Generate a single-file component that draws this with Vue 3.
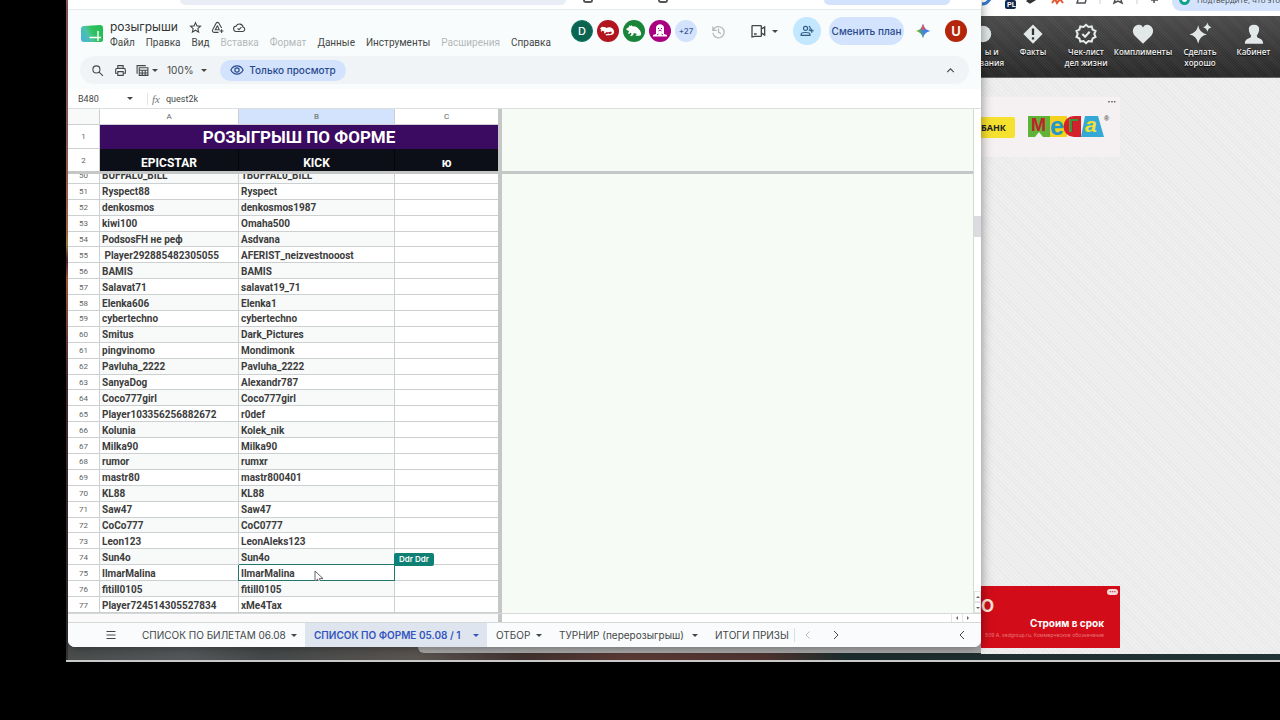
<script setup>
import { ref } from 'vue'

const title = ref('розыгрыши')
const cellName = ref('B480')
const formula = ref('quest2k')
const zoomLevel = ref('100%')

const menus = [
  { label: 'Файл' },
  { label: 'Правка' },
  { label: 'Вид' },
  { label: 'Вставка', off: true },
  { label: 'Формат', off: true },
  { label: 'Данные' },
  { label: 'Инструменты' },
  { label: 'Расширения', off: true },
  { label: 'Справка' }
]

const rows = [
  [50, 'BUFFAL0_BILL', '1BUFFAL0_BILL'],
  [51, 'Ryspect88', 'Ryspect'],
  [52, 'denkosmos', 'denkosmos1987'],
  [53, 'kiwi100', 'Omaha500'],
  [54, 'PodsosFH не реф', 'Asdvana'],
  [55, ' Player292885482305055', 'AFERIST_neizvestnooost'],
  [56, 'BAMIS', 'BAMIS'],
  [57, 'Salavat71', 'salavat19_71'],
  [58, 'Elenka606', 'Elenka1'],
  [59, 'cybertechno', 'cybertechno'],
  [60, 'Smitus', 'Dark_Pictures'],
  [61, 'pingvinomo', 'Mondimonk'],
  [62, 'Pavluha_2222', 'Pavluha_2222'],
  [63, 'SanyaDog', 'Alexandr787'],
  [64, 'Coco777girl', 'Coco777girl'],
  [65, 'Player103356256882672', 'r0def'],
  [66, 'Kolunia', 'Kolek_nik'],
  [67, 'Milka90', 'Milka90'],
  [68, 'rumor', 'rumxr'],
  [69, 'mastr80', 'mastr800401'],
  [70, 'KL88', 'KL88'],
  [71, 'Saw47', 'Saw47'],
  [72, 'CoCo777', 'CoC0777'],
  [73, 'Leon123', 'LeonAleks123'],
  [74, 'Sun4o', 'Sun4o'],
  [75, 'IlmarMalina', 'IlmarMalina'],
  [76, 'fitill0105', 'fitill0105'],
  [77, 'Player724514305527834', 'xMe4Tax']
]

const tabs = [
  { label: 'СПИСОК ПО БИЛЕТАМ 06.08', caret: true },
  { label: 'СПИСОК ПО ФОРМЕ 05.08 / 1', caret: true, active: true },
  { label: 'ОТБОР', caret: true },
  { label: 'ТУРНИР (перерозыгрыш)', caret: true },
  { label: 'ИТОГИ ПРИЗЫ', caret: false }
]
</script>

<template>
  <div class="desktop">
    <div class="wallpaper"></div>
    <div class="under-edge"></div>

    <main class="sheet">
      <div class="chrome">
        <div class="address"></div>
        <div class="chrome-icons"><i></i><i></i></div>
        <div class="chrome-pill"></div>
      </div>

      <header class="head">
        <svg class="logo" viewBox="0 0 24 20">
          <defs>
            <linearGradient id="lg" x1="0" x2="1" y1="0.7" y2="0.3">
              <stop offset="0" stop-color="#45b3d8" />
              <stop offset="0.35" stop-color="#4cc4a0" />
              <stop offset="0.6" stop-color="#2fc15c" />
              <stop offset="1" stop-color="#1fbf55" />
            </linearGradient>
          </defs>
          <path d="M4 2 L20 1 Q23 1 23 4 V16 Q23 18 20 18 L4 18 Q1 18 1 15 V5 Q1 2 4 2Z" fill="url(#lg)" />
          <path d="M9.500 13.500H21M18 7V17" stroke="#fff" stroke-width="1.400" fill="none" />
        </svg>
        <div class="names">
          <div class="title-line">
            <input v-model="title" class="title" aria-label="Название" />
            <button aria-label="Пометить"><svg viewBox="0 0 24 24"><path d="M12 3l2.700 6 6.500.6-4.900 4.400 1.500 6.500L12 17l-5.800 3.500 1.500-6.500L2.800 9.600 9.300 9z" /></svg></button>
            <button aria-label="Переместить"><svg viewBox="0 0 24 24"><path d="M14 21H5.500a3 3 0 0 1-2.600-4.500L9.400 4a3 3 0 0 1 5.200 0l5 9M12 8.500l-4 7.500h7l-3-7.500M19.500 15v7M16 18.500h7" /></svg></button>
            <button aria-label="Сохранено"><svg viewBox="0 0 24 24"><path d="M6.500 19.500a5 5 0 0 1-.8-10 6.800 6.800 0 0 1 12.800 1.800 4.200 4.200 0 0 1 0 8.200zM8.500 13.500l2.500 2.500 4.500-4.500" /></svg></button>
          </div>
          <nav class="menu">
            <button v-for="m in menus" :key="m.label" :disabled="m.off">{{ m.label }}</button>
          </nav>
        </div>
        <div class="people">
          <span class="avatar teal">D</span>
          <span class="avatar red">
            <svg viewBox="0 0 22 22"><path fill="#fff" d="M3 8.500l2-1.700 3.500.4 1 .8c2-1.300 4.500-.9 6 .5 2.200 2 2.200 5-.3 6.200-2 .8-4 .1-6 .8l-.8-1c2-1 4.300-.1 5.800-1 .9-.6.6-1.500-.2-2-1.500.8-3.200 1-4.700.6L8 13.500l-1-.5.4-1.500-1.900-.7-1.300.9-.6-.9.900-.8z" /></svg>
          </span>
          <span class="avatar green">
            <svg viewBox="0 0 22 22"><path fill="#fff" d="M3.500 8.500L6 7l.3-1.700L7.500 6l1.300-.7.7 1.200c2-.6 4 .2 5.700 2 2 2 3.300 4 2.800 6.500l-1.500.8H13l-.5-.9 1.500-.5-1-1-2-.4-1 2.200-2 1-.8-.7 1.300-1.200-.5-1.800-2 1.500-.9-.6 1-2.400L3.500 10z" /></svg>
          </span>
          <span class="avatar pink">
            <svg viewBox="0 0 22 22"><path fill="#fff" d="M7 14V8c0-5 8-5 8 0v6l3 1v1.500H4V15z" /><path d="M9 8.500h1M12 8.500h1M9.500 11l1.500-1 1.500 1M8 15l1.500-1M14 15l-1.500-1" stroke="#a8007e" fill="none" /></svg>
          </span>
          <span class="avatar more">+27</span>
        </div>
        <button class="history" aria-label="История"><svg viewBox="0 0 24 24"><path d="M3 4v6h6M3.500 10a9 9 0 1 1-.5 4M12 7v6l4 2.500" /></svg></button>
        <button class="video" aria-label="Видеовстреча">
          <svg viewBox="0 0 24 24"><path d="M3 21V5q0-1 1-1h12q1 0 1 1v14q0 1-1 1H7zM17 9l5-3v12l-5-3M6 16.500h4" /></svg>
          <span class="caret"></span>
        </button>
        <button class="share" aria-label="Поделиться"><svg viewBox="0 0 24 24"><path d="M9.500 11a3.500 3.500 0 1 0 0-7 3.500 3.500 0 0 0 0 7zM2 19.500v-2c0-4 15-4 15 0v2zM15 4c3.500 0 3.500 7 0 7M20 8v7M16.500 11.500h7" /></svg></button>
        <button class="plan">Сменить план</button>
        <svg class="spark" viewBox="0 0 20 20">
          <defs>
            <linearGradient id="sp" x1="0" x2="1" y1="0.7" y2="0.4">
              <stop offset="0" stop-color="#f0b429" />
              <stop offset="0.3" stop-color="#45ad5c" />
              <stop offset="0.55" stop-color="#4a7fe8" />
              <stop offset="1" stop-color="#3b7bf0" />
            </linearGradient>
          </defs>
          <path d="M10 1q1.500 7.500 9 9-7.500 1.500-9 9-1.500-7.500-9-9 7.500-1.500 9-9z" fill="url(#sp)" />
          <path d="M10 1q1.200 5 3 6.500L10 9 7.500 7.200Q9 5.500 10 1z" fill="#e0525a" />
        </svg>
        <span class="avatar user">U</span>
      </header>

      <div class="toolbar">
        <button aria-label="Поиск"><svg viewBox="0 0 24 24"><path d="M10 16.500a6.500 6.500 0 1 0 0-13 6.500 6.500 0 0 0 0 13zM15 15l7 7" /></svg></button>
        <button aria-label="Печать"><svg viewBox="0 0 24 24"><path d="M7 8V3h10v5M7 17H3v-6q0-3 3-3h12q3 0 3 3v6h-4M7 14h10v7H7z" /></svg></button>
        <button class="views" aria-label="Фильтры"><svg viewBox="0 0 24 24"><path d="M2 18V3h16M6 7h16v14H6zM6 11.500h16M6 16.500h16M11.500 11.500V21M17 11.500V21" /></svg><span class="caret"></span></button>
        <label class="zoom">
          <select v-model="zoomLevel" aria-label="Масштаб"><option>100%</option></select>
          <span class="caret"></span>
        </label>
        <button class="view-only">
          <svg viewBox="0 0 24 24"><path d="M1.500 12Q5 5 12 5t10.500 7Q19 19 12 19T1.500 12z" /><circle cx="12" cy="12" r="3.700" /></svg>
          Только просмотр
        </button>
        <button class="collapse" aria-label="Свернуть"><svg viewBox="0 0 24 24"><path d="M6 15l6-6 6 6" /></svg></button>
      </div>

      <div class="formula-bar">
        <input v-model="cellName" class="cell-name" aria-label="Ячейка" />
        <span class="caret"></span>
        <span class="fx">fx</span>
        <input v-model="formula" class="formula" aria-label="Формула" />
      </div>

      <section class="grid">
        <div class="columns">
          <table class="frozen">
            <colgroup><col class="c0" /><col class="c1" /><col class="c2" /><col class="c3" /></colgroup>
            <thead>
              <tr class="letters"><th class="corner"></th><th>A</th><th class="on">B</th><th>C</th></tr>
            </thead>
            <tbody>
              <tr class="banner"><th>1</th><td colspan="3">РОЗЫГРЫШ ПО ФОРМЕ</td></tr>
              <tr class="heads"><th>2</th><td>EPICSTAR</td><td>KICK</td><td>ю</td></tr>
            </tbody>
          </table>
          <div class="scroll">
            <table class="data">
              <colgroup><col class="c0" /><col class="c1" /><col class="c2" /><col class="c3" /></colgroup>
              <tbody>
                <tr v-for="r in rows" :key="r[0]">
                  <th>{{ r[0] }}</th>
                  <td>{{ r[1] }}</td>
                  <td :class="{ picked: r[0] === 75 }">
                    {{ r[2] }}
                    <template v-if="r[0] === 75">
                      <span class="who">Ddr Ddr</span>
                      <svg class="cursor" viewBox="0 0 10 14"><path d="M1 1v10.500l2.500-2.300 1.800 4 1.700-.8-1.700-3.800H9z" fill="#fff" stroke="#555" stroke-width=".9" /></svg>
                    </template>
                  </td>
                  <td></td>
                </tr>
              </tbody>
            </table>
          </div>
        </div>
        <div class="void"><div class="void-top"></div><div class="void-rest"></div></div>
        <div class="vbar"><div class="vtrack"><i class="thumb"></i></div><span class="step up"></span><span class="step down"></span></div>
      </section>
      <div class="hbar"><i class="hfreeze"></i><span class="step left"></span><span class="step right"></span></div>

      <footer class="tabs">
        <button class="all" aria-label="Все листы"><svg viewBox="0 0 24 24"><path d="M3 5h18M3 12h18M3 19h18" /></svg></button>
        <button v-for="t in tabs" :key="t.label" class="tab" :class="{ active: t.active }">
          <span>{{ t.label }}</span><span v-if="t.caret" class="caret"></span>
        </button>
        <button class="prev" aria-label="Назад"><svg viewBox="0 0 24 24"><path d="M15 5l-7 7 7 7" /></svg></button>
        <button class="next" aria-label="Вперёд"><svg viewBox="0 0 24 24"><path d="M8 4l8 8-8 8" /></svg></button>
        <button class="panel" aria-label="Панель"><svg viewBox="0 0 24 24"><path d="M16 4l-8 8 8 8" /></svg></button>
      </footer>
    </main>

    <aside class="site">
      <div class="site-chrome">
        <svg class="extensions" viewBox="0 0 191 10">
          <path d="M1 4q5 0 8-5" stroke="#3578c8" stroke-width="3" fill="none" />
          <rect x="24" y="0" width="11" height="9" rx="2" fill="#14284c" />
          <text x="26" y="7" class="pl">PL</text>
          <path d="M46 0l3 2 5-3" stroke="#333" stroke-width="3" fill="none" />
          <path d="M71 3l3-4 2 4 3-4 3 4" stroke="#e4572e" stroke-width="2" fill="none" />
          <path d="M97 0l-1 3h8l1-3M134 0l-1 3 4-2 4 2-1-3M173 0v3M170 0h7" stroke="#4c5055" stroke-width="1.500" fill="none" />
          <path d="M119 0v4M156 0v4" stroke="#ccd" />
        </svg>
        <div class="confirm"><i></i><span>Подтвердите, что это</span></div>
      </div>
      <nav class="site-nav">
        <a href="#" class="cut"><svg viewBox="0 0 24 24"><circle cx="12" cy="12" r="9" /></svg><span>ы и<br />вания</span></a>
        <a href="#"><svg viewBox="0 0 24 24"><path d="M12 1.500L22.500 12 12 22.500 1.500 12z" /><path d="M12 6v7M12 15.500v2.500" stroke="#333" stroke-width="2.500" /></svg><span>Факты</span></a>
        <a href="#"><svg viewBox="0 0 24 24"><path fill="none" stroke="#e6ebeb" stroke-width="2.200" d="M12 2l2.700 2.300 3.500-.5 1 3.400 3.200 1.500L21 12l1.400 3.300-3.200 1.500-1 3.400-3.500-.5L12 22l-2.700-2.300-3.500.5-1-3.400-3.200-1.500L3 12 1.600 8.700l3.200-1.500 1-3.400 3.500.5zM8 12l3 3 5-5.500" /></svg><span>Чек-лист<br />дел жизни</span></a>
        <a href="#"><svg viewBox="0 0 24 24"><path d="M12 22.500L3 14C-2 8 3 1.500 8 2q3 .3 4 3 1-2.700 4-3c5-.5 10 6 5 12z" /></svg><span>Комплименты</span></a>
        <a href="#"><svg viewBox="0 0 24 24"><path d="M10 2.500q1.500 8.500 9.500 10-8 1.500-9.500 10-1.500-8.500-9.500-10Q8.500 11 10 2.500zM20 -.5q.8 4 4.500 5-3.700 1-4.500 5-.8-4-4.500-5 3.700-1 4.500-5z" /></svg><span>Сделать<br />хорошо</span></a>
        <a href="#"><svg viewBox="0 0 24 24"><path d="M12 2c8 0 6 8 3 12l1 2c3 1 6 2 6 6.500H2C2 18 5 17 8 16l1-2C6 10 4 2 12 2z" /></svg><span>Кабинет</span></a>
      </nav>
      <div class="site-page">
        <div class="promo">
          <span class="bank">БАНК</span>
          <svg class="mega" viewBox="0 0 84 26">
            <path d="M1 2h22v21H16l-4-5-4 5H1z" fill="#5fb336" />
            <path d="M23 2h17v21H23z" fill="#f2d21f" />
            <path d="M58 2h13l6 21H54z" fill="#35a9d6" />
            <path d="M54 2v21h-7a10.500 10.500 0 0 1 0-21z" fill="#d3202a" />
            <text x="4" y="17" class="m1">М</text>
            <text x="23" y="21" class="m2">е</text>
            <text x="41" y="18" class="m3">Г</text>
            <text x="58" y="18" class="m4">а</text>
            <text x="77" y="7" class="m5">®</text>
          </svg>
          <span class="dots">•••</span>
        </div>
        <div class="red-ad">
          <span class="pill">•••</span>
          <b class="letter">О</b>
          <strong>Строим в срок</strong>
          <small>509 А. sedgroup.ru. Коммерческое обозначение</small>
        </div>
      </div>
    </aside>
  </div>
</template>

<style>
html, body { margin: 0; background: #000; }
</style>

<style scoped>
* { box-sizing: border-box; }
.desktop { position: relative; display: flex; align-items: flex-start; height: 100vh; padding: 0 0 58px 66px; background: #000; overflow: hidden; font-family: Inter, "Noto Sans", sans-serif; color: #444746; }
button, input, select { font: inherit; color: inherit; border: 0; padding: 0; margin: 0; background: none; }
button { display: flex; align-items: center; justify-content: center; white-space: nowrap; }
input { min-width: 0; outline: 0; }
svg { display: block; flex: none; fill: none; stroke: none; }
button svg { width: 14px; height: 14px; stroke: #444746; stroke-width: 2; }
.caret { flex: none; width: 0; height: 0; border: 3px solid transparent; border-top-color: #444746; border-bottom: 0; }

.wallpaper { position: absolute; left: 66px; right: 0; top: 0; bottom: 58px; border-bottom: 2px solid #c9c9c9; background: linear-gradient(90deg, #4a4d4c 0, #55585a 120px, #45494a 200px, #5a5551 350px, #40302e 460px, #5a3a35 560px, #4d332f 700px, #1c2c2d 780px, #223334 100%); }
.wallpaper::before { content: ""; position: absolute; left: 0; top: 0; width: 2px; bottom: 0; background: linear-gradient(#9a6462 0, #a46a62 130px, #c47852 230px, #b89a48 245px, #5a2838 260px, #c06a42 280px, #503040 380px, #333 100%); }
.under-edge { position: absolute; left: 418px; right: 0; top: 0; bottom: 67px; background: #a9aaa9; border-radius: 0 0 0 6px; }

.sheet { position: relative; z-index: 2; flex: 1; min-width: 0; margin-left: 2px; height: calc(100% - 15px); display: flex; flex-direction: column; background: #f9fcfc; border-radius: 0 0 7px 7px; overflow: hidden; box-shadow: 0 0 12px rgba(0, 0, 0, .45); }
.chrome { display: flex; flex: none; height: 10px; background: #fff; border-bottom: 1px solid #e8ecee; padding-left: 112px; }
.address { width: 386px; height: 5px; background: #e9eef6; border-radius: 0 0 8px 8px; }
.chrome-icons { display: flex; gap: 65px; padding-left: 17px; }
.chrome-icons i { width: 10px; height: 3px; border: 2px solid #555; border-top: 0; border-radius: 0 0 3px 3px; }
.chrome-pill { margin-left: auto; margin-right: 31px; width: 126px; height: 5px; background: #d3e3fd; border-radius: 0 0 8px 8px; }

.head { display: flex; align-items: center; flex: none; height: 46px; padding: 0 14px 4px 12px; }
.head > * { flex: none; }
.logo { width: 24px; height: 20px; margin-top: 5px; }
.names { margin-left: 6px; padding-top: 6px; }
.title-line { display: flex; align-items: center; gap: 8px; height: 18px; }
.title { width: 70px; height: 18px; font-size: 12px; line-height: 18px; color: #333; }
.title-line button { width: 14px; }
.title-line svg { width: 13px; height: 13px; }
.menu { display: flex; gap: 11px; height: 14px; font: 10px/14px Roboto, sans-serif; }
.menu button:disabled { color: #b4b8b9; }
.people { display: flex; gap: 4px; margin-left: auto; }
.avatar { display: flex; align-items: center; justify-content: center; width: 22px; height: 22px; border-radius: 50%; color: #fff; font-size: 11px; font-weight: 500; }
.avatar svg { width: 22px; height: 22px; }
.teal { background: #0b6350; border: 1px solid #0d7a62; }
.red { background: #b3151f; }
.green { background: #19843a; }
.pink { background: #a8007e; }
.more { background: #d3e3fd; color: #3d5a96; font-size: 8px; }
.user { background: #b3260b; font-size: 13px; font-weight: 600; }
.history { margin-left: 14px; }
.history svg { stroke: #b3b7b8; width: 15px; height: 15px; }
.video { gap: 6px; margin-left: 24px; }
.video svg { width: 16px; height: 16px; }
.share { width: 28px; height: 28px; margin-left: 15px; border-radius: 50%; background: #c2e7ff; }
.share svg { stroke: #2f5a80; }
.plan { width: 75px; height: 28px; margin-left: 8px; border-radius: 14px; background: #d3e3fd; color: #29498c; font-size: 10px; font-weight: 500; }
.spark { width: 16px; height: 16px; margin: 0 14px 0 11px; }

.toolbar { display: flex; align-items: center; flex: none; height: 28px; margin: 0 12px 5px; padding: 0 12px 0 11px; background: #f0f4f7; border-radius: 14px; font-size: 11px; }
.toolbar button svg { width: 13px; height: 13px; }
.toolbar > button + button { margin-left: 10px; }
.toolbar .views { gap: 3px; margin-left: 9px; }
.zoom { display: flex; align-items: center; margin-left: 9px; }
.zoom select { appearance: none; width: 34px; font-size: 10px; }
.toolbar .view-only { width: 126px; height: 21px; margin-left: 13px; gap: 5px; border-radius: 11px; background: #d3e3fd; color: #29498c; font-size: 10px; font-weight: 500; }
.toolbar .view-only svg { stroke: #29498c; width: 14px; height: 14px; }
.toolbar .collapse { margin-left: auto; }

.formula-bar { display: flex; align-items: center; flex: none; height: 20px; background: #fff; border-bottom: 1px solid #dadfe0; padding-left: 10px; font: 9px/12px Roboto, sans-serif; }
.cell-name { width: 49px; }
.fx { margin-left: 14px; padding-left: 4px; border-left: 1px solid #e3e6e6; font: italic 11px/12px "Liberation Serif", serif; color: #777; }
.formula { flex: 1; margin-left: 6px; }

.grid { flex: 1; min-height: 0; display: flex; background: #fff; border-bottom: 1px solid #d5d8d8; }
.columns { display: flex; flex-direction: column; width: 434px; border-right: 4px solid #c4c7c6; font-family: Roboto, sans-serif; }
table { width: 430px; table-layout: fixed; border-collapse: separate; border-spacing: 0; }
.c0 { width: 32px; } .c1 { width: 139px; } .c2 { width: 156px; } .c3 { width: 103px; }
th, td { padding: 0; border-right: 1px solid #cdd0d0; border-bottom: 1px solid #cdd0d0; overflow: hidden; white-space: pre; }
tr > :last-child { border-right: 0; }
th { font-size: 8px; font-weight: 400; color: #5f6363; text-align: center; }
.frozen { border-bottom: 3px solid #c4c7c6; }
.letters th { height: 16px; }
.letters .corner { background: #f8fafa; }
.letters .on { background: #d3e3fd; }
.banner > * { height: 24px; }
.banner td { background: #3b0a61; border-color: #3b0a61; color: #fff; font-size: 17px; line-height: 20px; font-weight: 700; text-align: center; }
.heads > * { height: 22px; border-bottom: 0; }
.heads td { background: #0c0f17; border-color: #050608; color: #fff; font-size: 12px; line-height: 14px; font-weight: 700; text-align: center; vertical-align: bottom; padding-bottom: 1px; }
.scroll { flex: 1; min-height: 0; overflow: hidden; }
.data { height: calc(100% + 6px); margin-top: -6px; }
.data td { position: relative; padding: 2px 0 0 2px; font-size: 10px; line-height: 12px; font-weight: 700; color: #3c3c3c; white-space: pre; }
.data th { padding-top: 2px; line-height: 12px; }
.data tr:nth-child(odd) td:nth-child(-n+3) { background: #f7faf9; }
.data td.picked { overflow: visible; border-color: #22776b; box-shadow: -1px 0 0 #22776b, 0 -1px 0 #22776b; white-space: nowrap; }
.who { position: absolute; left: 155px; top: -12px; padding: 0 5px; border-radius: 2px 2px 2px 0; background: #0f8074; color: #fff; font: 600 8px/13px Inter, sans-serif; }
.cursor { position: absolute; left: 75px; top: 5px; width: 10px; height: 14px; }

.void { flex: 1; display: flex; flex-direction: column; background: #f6fbf6; border-right: 1px solid #d5dad6; }
.void-top { height: 65px; border-bottom: 3px solid #c4c7c6; }
.vbar { display: flex; flex-direction: column; width: 7px; background: #fff; }
.vtrack { flex: 1; padding: 107px 0 0; }
.thumb { display: block; height: 21px; background: #dadce0; }
.step { display: flex; align-items: center; justify-content: center; height: 11px; border: 1px solid #e2e4e4; }
.step::before { content: ""; border: 2px solid transparent; }
.up::before { border-top: 0; border-bottom-color: #666; }
.down::before { border-bottom: 0; border-top-color: #666; }
.left::before { border-left: 0; border-right-color: #666; }
.right::before { border-right: 0; border-left-color: #666; }
.hbar { display: flex; flex: none; height: 9px; background: #fff; border-bottom: 1px solid #d5d8d8; padding-right: 8px; }
.hfreeze { width: 434px; margin-right: auto; border-right: 4px solid #c4c7c6; background: #fafafa; }
.left, .right { width: 11px; height: 8px; border-width: 0 0 0 1px; }

.tabs { display: grid; grid-template-columns: 65px 172px 182px 63px 156px 88px 28px 28px 1fr; height: 24px; flex: none; padding-right: 13px; font-size: 10px; background: #f9fbfd; }
.tab { justify-content: space-between; padding: 0 8px 0 9px; }
.tab.active { background: #dfe5ee; color: #3355c0; font-weight: 600; }
.tab.active .caret { border-top-color: #3355c0; }
.all { justify-content: flex-start; padding-left: 37px; }
.tabs svg { width: 12px; height: 12px; }
.prev { background: linear-gradient(#dcdfe0, #dcdfe0) 0 50% / 1px 14px no-repeat; }
.prev svg { stroke: #b8bcbd; }
.panel { justify-content: flex-end; }

.site { position: relative; z-index: 1; flex: none; width: 299px; height: calc(100% - 8px); display: flex; flex-direction: column; background: #ececec; }
.site-chrome { display: flex; flex: none; height: 16px; background: #fff; }
.extensions { width: 191px; height: 10px; }
.pl { font: 700 7px "Liberation Sans", sans-serif; fill: #fff; }
.confirm { flex: 1; display: flex; align-items: flex-start; gap: 7px; height: 11px; padding-left: 7px; overflow: hidden; white-space: nowrap; background: #d3e3fd; border-radius: 0 0 0 9px; font: 8px/10px "Open Sans", sans-serif; }
.confirm span { margin-top: -5px; }
.confirm i { flex: none; width: 11px; height: 11px; margin-top: -6px; border: 3px solid #13a08c; border-radius: 50%; background: #fff; }
.site-nav { display: grid; grid-template-columns: 26px 52px 54px 60px 54px 53px; height: 62px; padding-top: 7px; background: repeating-linear-gradient(45deg, transparent 0 1px, rgba(255, 255, 255, .05) 1px 2px), linear-gradient(#4a4a4a, #272727); border-bottom: 1px solid #666; }
.site-nav a { display: flex; flex-direction: column; align-items: center; gap: 1px; color: #f0f0f0; text-decoration: none; text-align: center; white-space: nowrap; font: 600 8px/11px "Open Sans", sans-serif; text-shadow: 0 1px 1px #000; }
.site-nav svg { width: 22px; height: 22px; fill: #e2e8e8; overflow: visible; }
.site-nav .cut { align-items: flex-end; padding-right: 3px; }
.site-nav .cut svg { margin-right: 10px; }
.site-page { flex: 1; display: flex; flex-direction: column; padding: 19px 0 6px; background: repeating-linear-gradient(45deg, #e9e9e9 0 1px, #efefef 1px 3px); }
.promo { position: relative; display: flex; align-items: center; width: 139px; height: 60px; background: #f5f1f2; }
.bank { width: 34px; height: 21px; border-radius: 0 2px 2px 0; background: #f7e12f; color: #222; font: 700 9px/21px "Open Sans", sans-serif; }
.mega { width: 84px; height: 26px; margin-left: 12px; }
.mega text { font-family: "Liberation Sans", sans-serif; font-weight: 700; }
.mega .m1 { font-size: 18px; fill: #c2202a; }
.mega .m2 { font-size: 25px; fill: #2397cc; }
.mega .m3 { font-size: 19px; fill: #39963a; }
.mega .m4 { font-size: 21px; font-style: italic; fill: #f6e030; }
.mega .m5 { font-size: 7px; fill: #555; }
.dots { position: absolute; right: 4px; top: 0; font-size: 5px; line-height: 9px; }
.red-ad { position: relative; display: flex; flex-direction: column; justify-content: flex-end; width: 139px; height: 62px; margin-top: auto; padding: 0 16px 8px 0; background: #d20d19; color: #fff; text-align: right; }
.red-ad strong { font-size: 10px; line-height: 14px; font-weight: 700; }
.red-ad small { align-self: flex-end; font-size: 5px; line-height: 10px; color: #e8777c; white-space: nowrap; }
.letter { position: absolute; left: 0; top: 11px; font-size: 17px; line-height: 18px; color: #fbe6da; }
.pill { position: absolute; right: 2px; top: 3px; padding: 0 2px; border-radius: 3px; background: #f4dcdc; color: #b03038; font-size: 4px; line-height: 6px; }
</style>
